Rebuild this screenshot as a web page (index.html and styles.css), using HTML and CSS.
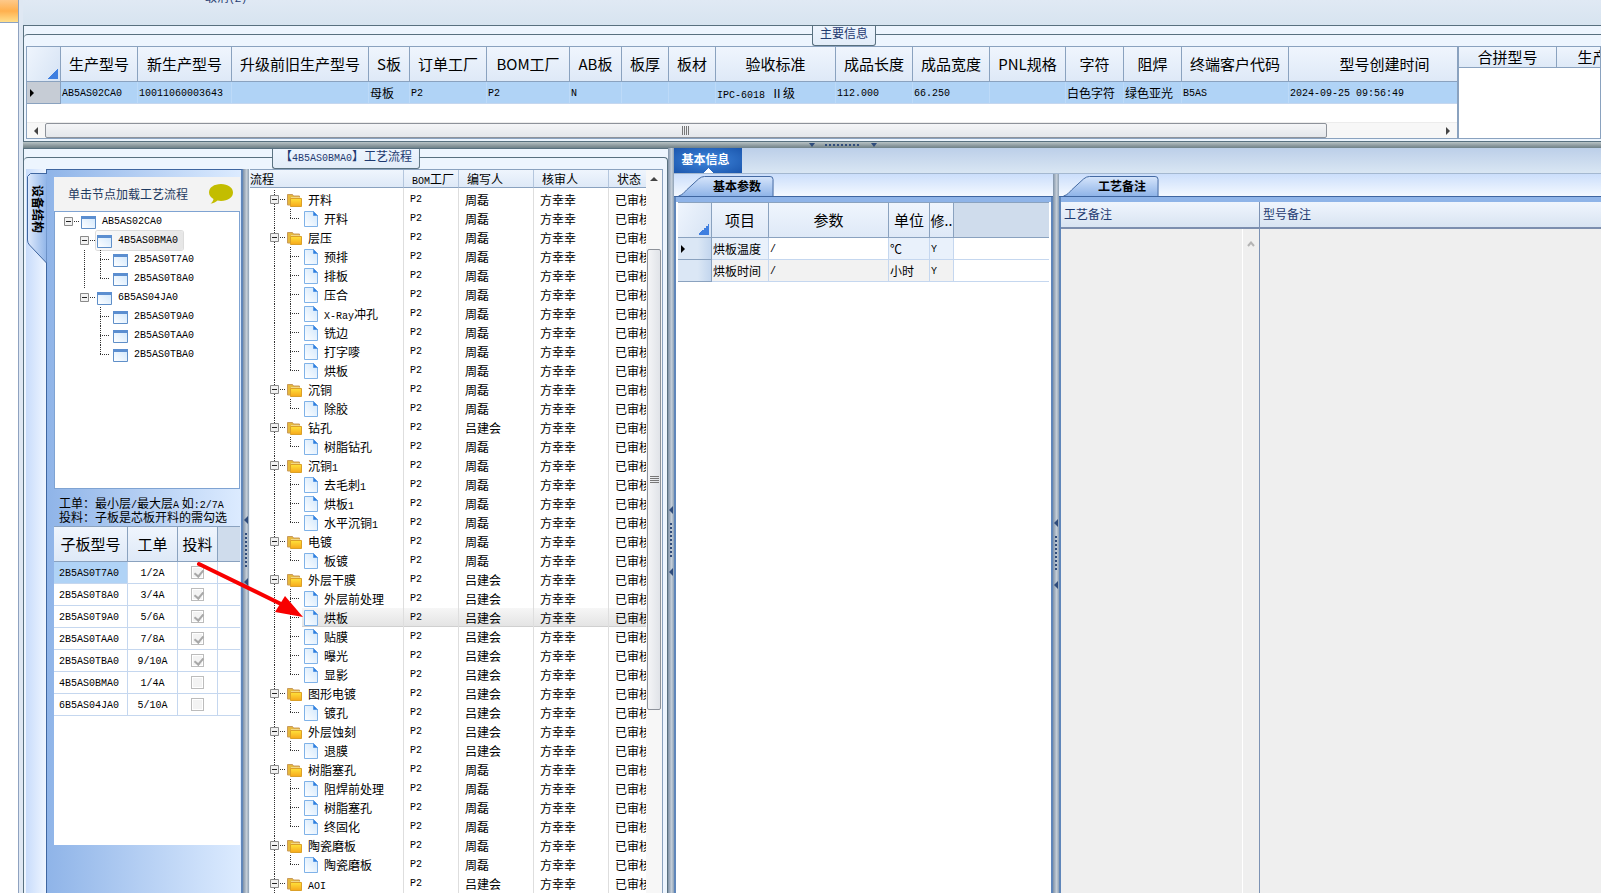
FILE: index.html
```html
<!DOCTYPE html>
<html lang="zh-CN">
<head>
  <meta charset="UTF-8">
  <title>工艺流程</title>
  <link rel="stylesheet" href="styles.css">
</head>
<body>

  <!-- icons shared by both trees -->
  <svg class="sprite" aria-hidden="true">
    <defs>
      <linearGradient id="g-folder" x1="0" y1="0" x2="0" y2="1">
        <stop offset="0" stop-color="#ffe23a"/><stop offset="1" stop-color="#f7a81b"/>
      </linearGradient>
      <linearGradient id="g-paper" x1="0" y1="1" x2="1" y2="0">
        <stop offset="0" stop-color="#ffffff"/><stop offset="1" stop-color="#cfe6fc"/>
      </linearGradient>
      <linearGradient id="g-tab" x1="0" y1="0" x2="0" y2="1">
        <stop offset="0" stop-color="#d6e5fb"/><stop offset="1" stop-color="#8fb4e8"/>
      </linearGradient>
      <linearGradient id="g-side" x1="0" y1="0" x2="1" y2="0">
        <stop offset="0" stop-color="#dfeafc"/><stop offset="1" stop-color="#8fb4e8"/>
      </linearGradient>
    </defs>
    <symbol id="i-folder" viewBox="0 0 16 16">
      <path d="M1.500 13V2.500h5l1 1.500h6V13z" fill="#e6b93c" stroke="#c99a5a"/>
      <path d="M5 5.500h10v3H5z" fill="#fff7d0"/>
      <path d="M4.500 14.500V6.500h11v8z" fill="url(#g-folder)" stroke="#dba028"/>
    </symbol>
    <symbol id="i-doc" viewBox="0 0 16 16">
      <path d="M2.500.500h9l4 4v11h-13z" fill="url(#g-paper)" stroke="#7fb2e8"/>
      <path d="M11.500.500v4h4z" fill="#2f7fe0" stroke="#5a9be6"/>
    </symbol>
    <symbol id="i-window" viewBox="0 0 16 16">
      <path d="M1.500 2.500h14v12h-14z" fill="url(#g-paper)" stroke="#5f8fc8"/>
      <path d="M1 2h15v3H1z" fill="#5b8ed0"/>
    </symbol>
    <symbol id="i-box" viewBox="0 0 9 9">
      <path d="M.5.5h8v8h-8z" fill="#f2f2f2" stroke="#8a8a8a"/>
      <path d="M2 4.500h5" stroke="#222"/>
    </symbol>
  </svg>

  <div class="rail"><div class="rail-item"></div></div>

  <div class="app">
    <div class="ribbon"><button type="button" class="cancel">取消<span class="lat">(Z)</span></button></div>

    <section class="info">
      <h2 class="legend">主要信息</h2>
      <div class="info-grids">
        <div class="grid-main">
          <table class="grid wide">
            <colgroup>
              <col class="w34"><col class="w77"><col class="w94"><col class="w137"><col class="w41"><col class="w77"><col class="w83"><col class="w52"><col class="w47"><col class="w47"><col class="w120"><col class="w77"><col class="w77"><col class="w76"><col class="w58"><col class="w58"><col class="w107"><col class="w192">
            </colgroup>
            <thead>
              <tr>
                <th class="corner"></th><th>生产型号</th><th>新生产型号</th><th>升级前旧生产型号</th><th>S板</th><th>订单工厂</th><th>BOM工厂</th><th>AB板</th><th>板厚</th><th>板材</th><th>验收标准</th><th>成品长度</th><th>成品宽度</th><th>PNL规格</th><th>字符</th><th>阻焊</th><th>终端客户代码</th><th>型号创建时间</th>
              </tr>
            </thead>
            <tbody>
              <tr class="selected">
                <td class="rowhead current"></td><td class="lat">AB5AS02CA0</td><td class="lat">10011060003643</td><td></td><td>母板</td><td class="lat">P2</td><td class="lat">P2</td><td class="lat">N</td><td></td><td></td><td><span class="lat">IPC-6018 </span>Ⅱ级</td><td class="lat">112.000</td><td class="lat">66.250</td><td></td><td>白色字符</td><td>绿色亚光</td><td class="lat">B5AS</td><td class="lat">2024-09-25 09:56:49</td>
              </tr>
            </tbody>
          </table>
          <div class="hscroll">
            <span class="tri left"></span>
            <div class="htrack"><div class="hthumb"><span class="grip"></span></div></div>
            <span class="tri right"></span>
          </div>
        </div>
        <div class="grid-side">
          <table class="grid short">
            <colgroup><col class="w98"><col class="w102"></colgroup>
            <thead><tr><th>合拼型号</th><th>生产型号</th></tr></thead>
          </table>
        </div>
      </div>
    </section>

    <div class="splitter-h"><span class="tri down"></span><span class="dots-h"></span><span class="tri down"></span></div>

    <div class="lower">
      <section class="flow">
        <h2 class="legend">【<span class="lat">4B5AS0BMA0</span>】工艺流程</h2>
        <div class="flow-body">
          <div class="side-tabs">
            <button type="button" class="side-tab">
              <svg viewBox="0 0 20 92"><path d="M20 .5H3.500l-3 3V67q0 3 2 5L19.500 90" fill="url(#g-side)" stroke="#3f66a0"/></svg>
              <span>设备结构</span>
            </button>
          </div>

          <div class="device">
            <div class="device-head">
              <span>单击节点加载工艺流程</span>
              <svg class="bubble" viewBox="0 0 26 22"><path d="M13 1C6 1 1 4.500 1 9.500c0 3 2 5 4.500 6.500-.5 2-1.500 3.500-3 4.500 3 0 5.500-1.500 7-3 1 .3 2.300.4 3.500.4 7 0 12-3.500 12-8.400S20 1 13 1z" fill="#c3bd00"/></svg>
            </div>
            <div class="device-tree" id="device-tree"></div>
            <p class="hint">工单：最小层<span class="lat">/</span>最大层<span class="lat">A</span> 如<span class="lat">:2/7A</span><br>投料：子板是芯板开料的需勾选</p>
            <div class="sub-grid">
              <table class="grid">
                <colgroup><col class="w74"><col class="w50"><col class="w40"><col></colgroup>
                <thead><tr><th>子板型号</th><th>工单</th><th>投料</th><th class="filler"></th></tr></thead>
                <tbody id="sub-rows"></tbody>
              </table>
            </div>
          </div>

          <div class="splitter-v"><span class="tri left"></span><span class="dots-v"></span><span class="tri left"></span></div>

          <div class="process">
            <div class="process-view">
              <table class="process-table">
                <colgroup><col class="w154"><col class="w55"><col class="w75"><col class="w75"><col class="w60"></colgroup>
                <thead><tr><th>流程</th><th><span class="lat">BOM</span>工厂</th><th>编写人</th><th>核审人</th><th>状态</th></tr></thead>
                <tbody id="process-rows"></tbody>
              </table>
            </div>
            <div class="vscroll">
              <span class="tri up"></span>
              <div class="vthumb"><span class="grip"></span></div>
            </div>
          </div>
        </div>
      </section>

      <div class="splitter-v"><span class="tri left"></span><span class="dots-v"></span><span class="tri left"></span></div>

      <section class="detail">
        <div class="main-tabs"><button type="button" class="main-tab">基本信息</button></div>
        <div class="detail-body">
          <div class="pane params">
            <div class="pane-tabs">
              <button type="button" class="pane-tab">
                <svg viewBox="0 0 100 21"><path d="M.5 20.500C5 19 6 17 9 14L21 3q3-2.500 6-2.500H94q3 0 3 3v17" fill="url(#g-tab)" stroke="#3f66a0"/></svg>
                <span>基本参数</span>
              </button>
            </div>
            <div class="pane-box">
              <table class="grid framed">
                <colgroup><col class="w34"><col class="w57"><col class="w120"><col class="w41"><col class="w24"><col></colgroup>
                <thead><tr><th class="corner"></th><th>项目</th><th>参数</th><th>单位</th><th class="clip">修..</th><th class="filler"></th></tr></thead>
                <tbody>
                  <tr><td class="rowhead current"></td><td class="ro">烘板温度</td><td class="lat">/</td><td class="ro">℃</td><td class="ro lat">Y</td><td></td></tr>
                  <tr><td class="rowhead"></td><td class="alt">烘板时间</td><td class="alt lat">/</td><td class="alt">小时</td><td class="alt lat">Y</td><td></td></tr>
                </tbody>
              </table>
            </div>
          </div>

          <div class="splitter-v"><span class="tri left"></span><span class="dots-v"></span><span class="tri left"></span></div>

          <div class="pane notes">
            <div class="pane-tabs">
              <button type="button" class="pane-tab">
                <svg viewBox="0 0 100 21"><path d="M.5 20.500C5 19 6 17 9 14L21 3q3-2.500 6-2.500H94q3 0 3 3v17" fill="url(#g-tab)" stroke="#3f66a0"/></svg>
                <span>工艺备注</span>
              </button>
            </div>
            <div class="pane-box note-cols">
              <div class="note">
                <label for="note-process">工艺备注</label>
                <div class="note-area">
                  <textarea id="note-process" readonly></textarea>
                  <div class="note-scroll"><svg viewBox="0 0 8 6"><path d="M1 5l3-3.500L7 5" fill="none" stroke="#b4b4b4" stroke-width="2"/></svg></div>
                </div>
              </div>
              <div class="note">
                <label for="note-model">型号备注</label>
                <div class="note-area"><textarea id="note-model" readonly></textarea></div>
              </div>
            </div>
          </div>
        </div>
      </section>
    </div>
  </div>

  <svg class="arrow" viewBox="0 0 110 60" aria-hidden="true">
    <path d="M4 5L88 46" stroke="#f80000" stroke-width="4" stroke-linecap="round"/>
    <path d="M108 58L90 37L80 53z" fill="#f80000"/>
  </svg>

  <script>
    // latin runs get the narrow mono face
    function mix(text) {
      return text.replace(/[\x21-\x7e]+/g, '<span class="lat">$&</span>');
    }
    function icon(name, cls) {
      return `<svg class="${cls || 'icon'}"><use href="#i-${name}"/></svg>`;
    }
    const box = `<span class="knot">${icon("box", "box")}</span>`;

    const devices = [
      ["AB5AS02CA0", box],
      ["4B5AS0BMA0", '<span class="gap"></span>' + box, "selected"],
      ["2B5AS0T7A0", '<span class="gap"></span><span class="line"></span><span class="tee"></span>'],
      ["2B5AS0T8A0", '<span class="gap"></span><span class="line"></span><span class="end"></span>'],
      ["6B5AS04JA0", '<span class="gap"></span>' + box],
      ["2B5AS0T9A0", '<span class="gap"></span><span class="gap"></span><span class="tee"></span>'],
      ["2B5AS0TAA0", '<span class="gap"></span><span class="gap"></span><span class="tee"></span>'],
      ["2B5AS0TBA0", '<span class="gap"></span><span class="gap"></span><span class="end"></span>']
    ];
    document.getElementById("device-tree").innerHTML = devices.map(([code, lead, cls]) => `
      <div class="node ${cls || ""}">${lead}<span class="node-label">${icon("window")}<span class="lat">${code}</span></span></div>
    `).join("");

    const subs = [
      ["2B5AS0T7A0", "1/2A", true],
      ["2B5AS0T8A0", "3/4A", true],
      ["2B5AS0T9A0", "5/6A", true],
      ["2B5AS0TAA0", "7/8A", true],
      ["2B5AS0TBA0", "9/10A", true],
      ["4B5AS0BMA0", "1/4A", false],
      ["6B5AS04JA0", "5/10A", false]
    ];
    document.getElementById("sub-rows").innerHTML = subs.map(([code, order, on], i) => `
      <tr>
        <td class="code lat ${i === 0 ? "picked" : ""}">${code}</td>
        <td class="mid lat">${order}</td>
        <td class="mid"><input type="checkbox" aria-label="${code} 投料" disabled ${on ? "checked" : ""}></td>
        <td></td>
      </tr>
    `).join("");

    const Z = "周磊", L = "吕建会";
    const groups = [
      ["开料", Z, [["开料", Z]]],
      ["层压", Z, [["预排", Z], ["排板", Z], ["压合", Z], ["X-Ray冲孔", Z], ["铣边", Z], ["打字嘜", Z], ["烘板", Z]]],
      ["沉铜", Z, [["除胶", Z]]],
      ["钻孔", L, [["树脂钻孔", Z]]],
      ["沉铜1", Z, [["去毛刺1", Z], ["烘板1", Z], ["水平沉铜1", Z]]],
      ["电镀", Z, [["板镀", Z]]],
      ["外层干膜", L, [["外层前处理", L], ["烘板", L, true], ["贴膜", L], ["曝光", L], ["显影", L]]],
      ["图形电镀", L, [["镀孔", L]]],
      ["外层蚀刻", L, [["退膜", L]]],
      ["树脂塞孔", Z, [["阻焊前处理", Z], ["树脂塞孔", Z], ["终固化", Z]]],
      ["陶瓷磨板", Z, [["陶瓷磨板", Z]]],
      ["AOI", L, []]
    ];
    function row(lead, iconName, name, writer, selected) {
      return `<tr class="${selected ? "selected" : ""}">
        <td><div class="node">${lead}<span class="node-label">${icon(iconName)}<span>${mix(name)}</span></span></div></td>
        <td class="lat">P2</td><td>${writer}</td><td>方幸幸</td><td>已审核</td></tr>`;
    }
    let html = '<tr class="peek"><td></td><td></td><td></td><td></td><td></td></tr>';
    groups.forEach(([name, writer, steps]) => {
      html += row(box.replace("knot", "knot line"), "folder", name, writer);
      steps.forEach(([step, by, selected], i) => {
        const end = i === steps.length - 1 ? "end" : "tee";
        html += row(`<span class="line"></span><span class="${end}"></span>`, "doc", step, by, selected);
      });
    });
    document.getElementById("process-rows").innerHTML = html;
  </script>
</body>
</html>
```
FILE: styles.css
```css
* {
  box-sizing: border-box;
}
body {
  margin: 0;
  height: 100vh;
  display: flex;
  overflow: hidden;
  background: #fff;
  color: #000;
  font: 12px/18px "Noto Sans CJK SC", sans-serif;
}
button {
  margin: 0;
  padding: 0;
  border: none;
  background: none;
  color: inherit;
  font: inherit;
}
.lat {
  font-family: "Liberation Mono", monospace;
  font-size: 10px;
}
span.lat {
  line-height: 1px;
}
.sprite {
  position: absolute;
  width: 0;
  height: 0;
}

/* left rail */
.rail {
  flex: 0 0 18px;
}
.rail-item {
  height: 23px;
  background: linear-gradient(#fdc98a, #ffb04e 50%, #ffdf8c);
  border-bottom: 1px solid #8aa2c4;
}
.app {
  flex: 1;
  min-width: 0;
  display: flex;
  flex-direction: column;
  border-left: 1px solid #8fa2c0;
  padding-left: 4px;
  background: #dfe8f3;
}
.ribbon {
  height: 25px;
  background: linear-gradient(#e0e9f4, #d7e4f0);
  overflow: hidden;
}
.cancel {
  display: block;
  margin: -11px 0 0 182px;
  line-height: 16px;
  color: #1f3a70;
}

/* group boxes */
.info,
.flow {
  position: relative;
  background: #edf5fe;
  border: 1px solid #58707f;
  border-right: none;
  border-bottom: none;
}
.info {
  height: 117px;
  border-bottom: 1px solid #58707f;
  padding-top: 8px;
}
.legend {
  position: absolute;
  top: 0;
  left: 52%;
  transform: translateX(-50%);
  margin: 0;
  height: 20px;
  padding: 0 7px;
  border: 1px solid #58707f;
  border-top: none;
  border-radius: 0 0 3px 3px;
  background: linear-gradient(#edf5fe, #e2ecf8);
  color: #1f3a70;
  font-size: 12px;
  font-weight: normal;
  line-height: 14px;
  white-space: nowrap;
}
.info-grids {
  display: flex;
  height: 105px;
  padding: 11px 0 0 2px;
  border-top: 1px solid #58707f;
  border-radius: 4px 0 0 0;
}
.grid-main {
  flex: 0 1 1432px;
  min-width: 0;
  display: flex;
  flex-direction: column;
  overflow: hidden;
  background: #fff;
  border: 1px solid #8aa2bf;
}
.grid-side {
  flex: 1;
  min-width: 0;
  overflow: hidden;
  background: #fff;
  border: 1px solid #8aa2bf;
}

/* data grids */
.grid {
  width: 100%;
  border-collapse: separate;
  border-spacing: 0;
  table-layout: fixed;
}
.grid.wide {
  width: 1454px;
}
.grid.short {
  width: 200px;
}
.grid.framed {
  border-top: 1px solid #8aa2bf;
}
.grid th {
  height: 35px;
  padding: 0;
  border-right: 1px solid #8aa2bf;
  border-bottom: 1px solid #8aa2bf;
  background: linear-gradient(#eff5fd, #dee9f7);
  font-size: 15px;
  font-weight: normal;
  line-height: 20px;
  white-space: nowrap;
}
.grid.short th {
  height: 21px;
}
.grid th.corner {
  background: linear-gradient(135deg, transparent 50%, #3f7fe0 50%) right 2px bottom 2px / 11px 11px no-repeat, linear-gradient(120deg, #eff5fd, #d6e3f4);
}
.grid th.filler {
  background: #cfdcec;
  border-right: none;
}
.grid th.clip {
  font-size: 14px;
  overflow: hidden;
}
.grid td {
  height: 22px;
  padding: 0 0 0 1px;
  border-right: 1px solid #c5d7ef;
  border-bottom: 1px solid #c5d7ef;
  line-height: 18px;
  white-space: nowrap;
}
.grid td.lat {
  padding-top: 2px;
}
.grid td:last-child {
  border-right: none;
}
.grid .selected td {
  background: #b0d3f6;
  border-right-color: #bddaf8;
}
.grid td.rowhead {
  background: linear-gradient(90deg, #dbe7f5 60%, #c3d6ee);
  border-color: #8aa2bf;
}
.grid .selected td.rowhead {
  background: #c6ccd5;
  border-right-color: #8aa2bf;
}
td.current::before {
  content: "";
  display: block;
  margin-left: 2px;
  width: 0;
  border: 4px solid transparent;
  border-left-color: #000;
  border-right-width: 0;
}
.grid td.ro {
  background: #e9f1fb;
}
.grid td.alt {
  background: #f2f2f2;
}
.grid td.mid {
  padding-left: 0;
  text-align: center;
}
.grid td.code {
  padding-left: 5px;
}
.grid td.picked {
  background: #b0d3f6;
}
input[type="checkbox"] {
  appearance: none;
  display: block;
  width: 13px;
  height: 13px;
  margin: 0 auto;
  border: 1px solid #bcbcbc;
  background: #f3f3f3;
  box-shadow: inset 0 0 0 1px #fff;
}
input[type="checkbox"]:checked::before {
  content: "";
  display: block;
  width: 4px;
  height: 7px;
  margin: 1px 0 0 4px;
  border: solid #a8a8a8;
  border-width: 0 2px 2px 0;
  transform: rotate(40deg);
}

.w24 { width: 24px; }
.w34 { width: 34px; }
.w40 { width: 40px; }
.w41 { width: 41px; }
.w47 { width: 47px; }
.w50 { width: 50px; }
.w52 { width: 52px; }
.w55 { width: 55px; }
.w57 { width: 57px; }
.w58 { width: 58px; }
.w60 { width: 60px; }
.w74 { width: 74px; }
.w75 { width: 75px; }
.w76 { width: 76px; }
.w77 { width: 77px; }
.w83 { width: 83px; }
.w94 { width: 94px; }
.w98 { width: 98px; }
.w102 { width: 102px; }
.w107 { width: 107px; }
.w120 { width: 120px; }
.w137 { width: 137px; }
.w154 { width: 154px; }
.w192 { width: 192px; }

/* scroll bars and splitters */
.tri {
  width: 0;
  height: 0;
  border: 4px solid transparent;
}
.tri.left { border-right-color: #444; border-left-width: 0; }
.tri.right { border-left-color: #444; border-right-width: 0; }
.tri.up { border-bottom-color: #444; border-top-width: 0; }
.tri.down { border-top-color: #2f4c7c; border-bottom-width: 0; }
.hscroll {
  margin-top: auto;
  height: 16px;
  display: flex;
  align-items: center;
  padding: 0 7px;
  background: #f7f7f7;
  border-top: 1px solid #ececec;
}
.htrack {
  flex: 1;
  padding: 0 7px;
}
.hthumb {
  width: 92%;
  height: 15px;
  display: flex;
  align-items: center;
  justify-content: center;
  border: 1px solid #8d929a;
  border-radius: 2px;
  background: linear-gradient(#f4f5f7, #e4e7eb);
}
.grip {
  width: 8px;
  height: 9px;
  background: repeating-linear-gradient(90deg, #777 0 1px, transparent 1px 2px);
}
.splitter-h {
  flex: 0 0 6px;
  display: flex;
  align-items: center;
  justify-content: center;
  gap: 10px;
  padding-left: 62px;
  background: linear-gradient(#b9c3c6, #8c999e 60%, #6f8188);
}
.splitter-h .tri {
  border-width: 4px 3px 0;
}
.dots-h {
  width: 36px;
  height: 2px;
  background: repeating-linear-gradient(90deg, #2f4c7c 0 2px, transparent 2px 4px);
}
.splitter-v {
  flex: 0 0 6px;
  display: flex;
  flex-direction: column;
  align-items: center;
  justify-content: center;
  gap: 9px;
  padding-top: 40px;
  background: linear-gradient(90deg, #7f92a8, #c4ced8 60%, #8da0b4);
}
.splitter-v .tri {
  border-right-color: #2f4c7c;
}
.dots-v {
  width: 2px;
  height: 36px;
  background: repeating-linear-gradient(#2f4c7c 0 2px, transparent 2px 4px);
}

/* lower area */
.lower {
  flex: 1;
  min-height: 0;
  display: flex;
}
.flow {
  flex: 0 0 645px;
  min-width: 0;
  padding-top: 8px;
}
.flow .legend {
  left: 50%;
}
.flow-body {
  height: 100%;
  display: flex;
  padding: 11px 4px 0 2px;
  border-top: 1px solid #58707f;
  border-right: 1px solid #58707f;
  border-radius: 4px 4px 0 0;
}
.side-tabs {
  flex: 0 0 21px;
  min-width: 0;
  padding: 4px 0 0 1px;
  background: linear-gradient(90deg, #c8dcfb, #eef5ff);
  border-right: 1px solid #3f66a0;
}
.side-tab {
  display: grid;
  width: 20px;
  height: 92px;
}
.side-tab svg,
.side-tab span {
  grid-area: 1 / 1;
}
.side-tab span {
  padding: 12px 0 0 1px;
  text-align: left;
  writing-mode: vertical-rl;
  text-orientation: sideways;
  font-weight: bold;
}
.device {
  flex: 0 0 196px;
  min-width: 0;
  display: flex;
  flex-direction: column;
  padding: 7px 1px 0 7px;
  background: linear-gradient(90deg, #8fb4e8, #dcebff);
  border-top: 1px solid #3f66a0;
  border-right: 2px solid #5f86ba;
}
.device-head {
  flex: 0 0 34px;
  display: flex;
  align-items: center;
  justify-content: space-between;
  padding: 0 6px 0 14px;
  background: #f3f3f3;
  color: #1f3a60;
}
.bubble {
  width: 26px;
  height: 22px;
}
.device-tree {
  flex: 0 0 278px;
  padding: 0 5px;
  background: #fff;
  border: 1px solid #7fa3d2;
}
.hint {
  margin: 0;
  padding: 7px 0 2px 5px;
  line-height: 14px;
  white-space: nowrap;
}
.sub-grid {
  flex: 0 0 319px;
  background: #fff;
  border-top: 1px solid #8aa2bf;
}

/* tree nodes */
.node {
  display: flex;
  height: 19px;
  line-height: 19px;
}
.gap,
.line {
  flex: 0 0 16px;
}
.knot,
.tee,
.end {
  flex: 0 0 20px;
}
.knot {
  padding: 5px 0 0 4px;
  background: repeating-linear-gradient(90deg, #333 0 1px, transparent 1px 2px) 12px 9px / 8px 1px no-repeat;
}
.box {
  display: block;
  width: 9px;
  height: 9px;
}
.line {
  background: repeating-linear-gradient(#333 0 1px, transparent 1px 2px) 8px 0 / 1px 100% no-repeat;
}
.knot.line {
  flex-basis: 20px;
  background:
    repeating-linear-gradient(90deg, #333 0 1px, transparent 1px 2px) 12px 9px / 8px 1px no-repeat,
    repeating-linear-gradient(#333 0 1px, transparent 1px 2px) 8px 0 / 1px 100% no-repeat;
}
.tee {
  background:
    repeating-linear-gradient(90deg, #333 0 1px, transparent 1px 2px) 8px 9px / 10px 1px no-repeat,
    repeating-linear-gradient(#333 0 1px, transparent 1px 2px) 8px 0 / 1px 100% no-repeat;
}
.end {
  background:
    repeating-linear-gradient(90deg, #333 0 1px, transparent 1px 2px) 8px 9px / 10px 1px no-repeat,
    repeating-linear-gradient(#333 0 1px, transparent 1px 2px) 8px 0 / 1px 10px no-repeat;
}
.node-label {
  display: flex;
  align-items: center;
  gap: 6px;
  padding-right: 5px;
  white-space: nowrap;
}
.icon {
  width: 16px;
  height: 16px;
}
.device-tree .lat {
  line-height: 19px;
}
.device-tree .selected .node-label {
  border-radius: 2px;
  background: linear-gradient(90deg, #fafafa, #e6e6e6);
  box-shadow: 0 0 0 1px #dcdcdc;
}

/* process list */
.process {
  flex: 1;
  min-width: 0;
  display: flex;
  overflow: hidden;
  margin-left: 1px;
  background: #fff;
  border-top: 1px solid #8aa2bf;
  border-right: 1px solid #8aa2bf;
}
.process-view {
  flex: 1;
  min-width: 0;
  overflow: hidden;
}
.process-table {
  width: 419px;
  border-spacing: 0;
  table-layout: fixed;
}
.process-table th {
  height: 18px;
  padding: 0 0 0 8px;
  border-right: 1px solid #b4c6dd;
  border-bottom: 1px solid #8aa2bf;
  background: linear-gradient(#eff5fd, #dee9f7);
  font-weight: normal;
  line-height: 17px;
  text-align: left;
}
.process-table th:first-child {
  padding-left: 0;
}
.process-table td {
  height: 19px;
  padding: 0 0 0 6px;
  border-right: 1px solid #dedede;
  line-height: 19px;
}
.process-table td:first-child {
  padding-left: 16px;
}
.process-table .peek td {
  height: 2px;
}
.process-table .selected td {
  background: linear-gradient(#f6f6f6, #e4e4e4 18px, #d0d0d0 18px);
}
.process-table .selected td:first-child {
  background: linear-gradient(#f6f6f6, #e4e4e4 18px, #d0d0d0 18px) 52px 0 no-repeat;
}
.vscroll {
  flex: 0 0 16px;
  display: flex;
  flex-direction: column;
  align-items: center;
  padding: 7px 1px 0;
  background: #f7f7f7;
}
.vthumb {
  width: 14px;
  height: 461px;
  margin-top: 68px;
  display: flex;
  align-items: center;
  justify-content: center;
  border: 1px solid #8d929a;
  border-radius: 2px;
  background: linear-gradient(90deg, #f4f5f7, #e0e3e8);
}
.vthumb .grip {
  width: 9px;
  height: 8px;
  background: repeating-linear-gradient(#777 0 1px, transparent 1px 2px);
}

/* detail area */
.detail {
  flex: 1;
  min-width: 0;
  display: flex;
  flex-direction: column;
}
.main-tabs {
  height: 26px;
  background: linear-gradient(#bccfe9, #d9e6f3);
  border-bottom: 1px solid #a4b8d0;
}
.main-tab {
  display: block;
  width: 68px;
  height: 25px;
  padding: 0 5px 3px 0;
  background:
    conic-gradient(from 135deg at 50% 0, #fff 90deg, transparent 0) 29px 20px / 10px 5px no-repeat,
    radial-gradient(#3f86dc, #1b56ad);
  color: #fff;
  font-weight: bold;
}
.detail-body {
  flex: 1;
  min-height: 0;
  display: flex;
}
.pane {
  min-width: 0;
  display: flex;
  flex-direction: column;
}
.params {
  flex: 0 0 379px;
}
.notes {
  flex: 1;
}
.pane-tabs {
  height: 23px;
  padding: 2px 0 0 4px;
  background: linear-gradient(#cbdefb, #f4f9ff);
  border-bottom: 1px solid #3f66a0;
}
.pane-tab {
  display: grid;
  width: 98px;
  height: 21px;
}
.pane-tab svg,
.pane-tab span {
  grid-area: 1 / 1;
}
.pane-tab span {
  padding-left: 20px;
  text-align: center;
  font-weight: bold;
  line-height: 20px;
}
.pane-box {
  flex: 1;
  padding: 5px 2px 0;
  background: linear-gradient(#8fb4e8, #8fb4e8) 0 0 / 100% 5px no-repeat, #fff;
  border: solid #5f86ba;
  border-width: 0 2px;
}
.note-cols {
  display: flex;
  padding: 5px 0 0;
  background: #8fb4e8;
  border-right: none;
}
.note {
  flex: 1;
  display: flex;
  flex-direction: column;
}
.note:first-child {
  flex: 0 0 199px;
  border-right: 1px solid #7c92b4;
}
.note label {
  height: 27px;
  padding-left: 3px;
  background: linear-gradient(#f0f5fd, #d8e4f2);
  border-bottom: 2px solid #7c8eae;
  color: #1f3a70;
  line-height: 24px;
}
.note-area {
  flex: 1;
  display: flex;
  background: #efefef;
}
.note textarea {
  flex: 1;
  min-width: 0;
  border: none;
  padding: 2px;
  background: #efefef;
  resize: none;
  outline: none;
}
.note-scroll {
  flex: 0 0 17px;
  padding-top: 4px;
  border-left: 1px solid #fff;
  text-align: center;
}
.note-scroll svg {
  width: 8px;
  height: 6px;
}

/* pointer drawn over the tree */
.arrow {
  position: absolute;
  left: 195px;
  top: 559px;
  width: 110px;
  height: 60px;
}
```
